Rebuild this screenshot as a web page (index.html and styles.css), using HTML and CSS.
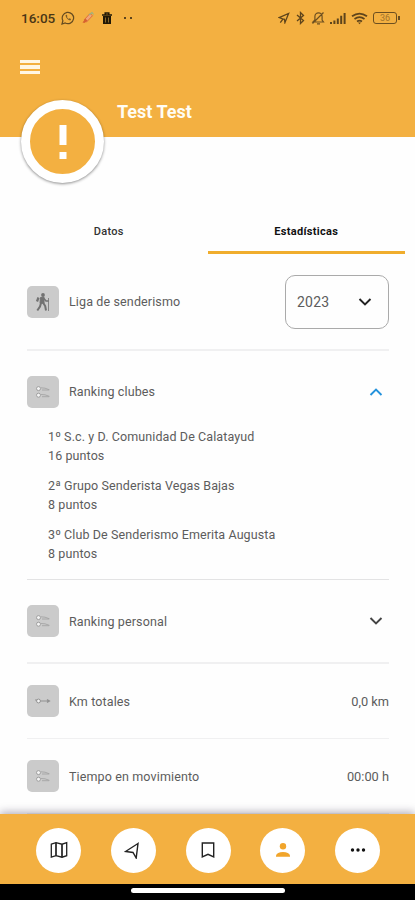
FILE: index.html
```html
<!DOCTYPE html>
<html lang="es">
<head>
<meta charset="utf-8">
<meta name="viewport" content="width=device-width, initial-scale=1">
<title>Estadísticas</title>
<link rel="stylesheet" href="styles.css">
</head>
<body>
<svg class="defs" aria-hidden="true">
  <symbol id="i-list" viewBox="0 0 16 16">
    <g fill="#f4f4f4" stroke="#929292" stroke-width=".8"><circle cx="3.5" cy="4.6" r="2"/><circle cx="3.5" cy="11.2" r="2"/></g>
    <path d="M6 3.800l4 .4 4.500 1.600M7 6h7M6 10.500l4 .3 4.500 1.600M7 12.700h7" fill="none" stroke="#a0a0a0" stroke-width=".8"/>
  </symbol>
  <symbol id="i-down" viewBox="0 0 14 10"><path d="M1.500 2L7 7.500 12.500 2" fill="none" stroke="currentColor" stroke-width="1.900"/></symbol>
</svg>
<div class="screen">
  <header class="header">
    <div class="status">
      <span class="clock">16:05</span>
      <svg class="s-wa" width="14" height="14" viewBox="0 0 14 14" fill="none" stroke="#654b20" stroke-width="1.200"><path d="M1 13l.9-3.300a5.700 5.700 0 1 1 2.300 2.300z"/><path d="M4.700 4c-.7 2 2.900 6 5 5.200l.3-1.300-1.500-.7-.8.7-1.900-1.900.6-.8-.6-1.400z" fill="#795b28" stroke="none"/></svg>
      <svg class="s-clip" width="14" height="14" viewBox="0 0 14 14" fill="none"><path d="M3 9l6-6.500 2.500 2.200-6 6.300z" fill="#f1a477" stroke="#db713d"/><path d="M1.500 11.500l3-4 2 2.200-3 2.300z" fill="#d7632f"/><path d="M8 4l3-2.500 1.500 2" stroke="#9ab183" stroke-width="1.200"/></svg>
      <svg class="s-bin" width="12" height="13" viewBox="0 0 12 13"><path d="M1 3h10M4.300 2.300V1h3.400v1.300" stroke="#211806" stroke-width="1.700" fill="none"/><path d="M2 4h8v8H2z" fill="#211806"/><path d="M4.500 5.500v5M7.500 5.500v5" stroke="#a77c32" stroke-width=".8"/></svg>
      <span class="dots"><i></i><i></i></span>
      <span class="grow"></span>
      <svg class="s-loc" width="12" height="12" viewBox="0 0 13 13" fill="none" stroke="#5e441b" stroke-width="1.400"><path d="M1.200 6L11.500 1.500 7.500 11.500 7 8 5 7.500zM5.500 7.500L2.500 11.500"/></svg>
      <svg class="s-bt" width="9" height="14" viewBox="0 0 9 14" fill="none" stroke="#5e441b" stroke-width="1.300"><path d="M1 4l6.500 5.500-3 3V1.500l3 3L1 10"/></svg>
      <svg class="s-bell" width="15" height="14" viewBox="0 0 15 14" fill="none" stroke="#6c4f20" stroke-width="1.200"><path d="M2 11h10.500l-1.400-2V5.500a3.600 3.600 0 0 0-7.200 0V9zM6 12.800h3M1.500 12.500L12.500 1.500"/></svg>
      <svg class="s-sig" width="16" height="13" viewBox="0 0 16 13" fill="#5e441b"><path d="M0 10h2v2H0zM3.400 8.500h2V12h-2zM6.800 6.500h2V12h-2zM10.200 3.800h2V12h-2zM13.600 1h2v11h-2z"/></svg>
      <svg class="s-wifi" width="17" height="13" viewBox="0 0 17 13" fill="none" stroke="#5e441b" stroke-width="1.700"><path d="M1 4.300q7.500-5.500 15 0M3.500 7q5-3.600 10 0M6 9.500q2.500-1.700 5 0"/><path d="M7 10.500h3l-1.500 1.800z" fill="#5e441b" stroke="none"/></svg>
      <span class="battery">36</span>
    </div>
    <div class="burger"><i></i><i></i><i></i></div>
    <div class="profile">
      <div class="avatar"><svg width="8" height="34" viewBox="0 0 8 34" fill="#fff"><path d="M.5 0h7v20h-7zM.5 27h7v7h-7z"/></svg></div>
      <h1 class="name">Test Test</h1>
    </div>
  </header>

  <nav class="tabs">
    <a class="tab">Datos</a>
    <a class="tab active">Estadísticas</a>
  </nav>

  <main class="content">
    <section class="row league">
      <span class="tile"><svg width="16" height="20" viewBox="0 0 16 20" fill="none" stroke="#727272"><circle cx="8" cy="3" r="1.900" fill="#727272" stroke="none"/><path d="M5.500 5.500l3.500-.3v6H5z" fill="#727272"/><path d="M3.500 5.500L2 9.500" stroke-width="2.300"/><path d="M8.500 6l2.500 3h2.500" stroke-width="1.500"/><path d="M6 11l-1 3.500-2.700 4M8 10.500l2.200 3.500.8 4.500" stroke-width="2"/><path d="M13.500 6v13" stroke-width=".8"/></svg></span>
      <span class="label">Liga de senderismo</span>
      <span class="select"><span>2023</span><svg width="14" height="10"><use href="#i-down"/></svg></span>
    </section>
    <section class="clubs">
      <div class="row clubs-head">
        <span class="tile"><svg width="16" height="16"><use href="#i-list"/></svg></span>
        <span class="label">Ranking clubes</span>
        <svg class="chev up" width="14" height="10"><use href="#i-down"/></svg>
      </div>
      <ol class="ranking">
        <li><span>1º S.c. y D. Comunidad De Calatayud</span><span>16 puntos</span></li>
        <li><span>2ª Grupo Senderista Vegas Bajas</span><span>8 puntos</span></li>
        <li><span>3º Club De Senderismo Emerita Augusta</span><span>8 puntos</span></li>
      </ol>
    </section>
    <section class="row personal">
      <span class="tile"><svg width="16" height="16"><use href="#i-list"/></svg></span>
      <span class="label">Ranking personal</span>
      <svg class="chev" width="14" height="10"><use href="#i-down"/></svg>
    </section>
    <section class="row km">
      <span class="tile"><svg width="16" height="10" viewBox="0 0 16 10" fill="none" stroke="#929292"><path d="M4 5h10M12 3.500L14.500 5 12 6.500" stroke-width="1.200"/><circle cx="3.500" cy="5" r="1.900" fill="#f4f4f4"/><path d="M1 3v2"/></svg></span>
      <span class="label">Km totales</span>
      <span class="value">0,0 km</span>
    </section>
    <section class="row time">
      <span class="tile"><svg width="16" height="16"><use href="#i-list"/></svg></span>
      <span class="label">Tiempo en movimiento</span>
      <span class="value">00:00 h</span>
    </section>
  </main>

  <nav class="bottom">
    <a class="round"><svg width="18" height="18" viewBox="0 0 18 18" fill="none" stroke="#222" stroke-width="1.300"><path d="M1.300 3.200L6 1.700l6 1.500 4.700-1.500v13L12 16.200l-6-1.500-4.700 1.500z"/><path d="M6 1.700v13M12 3.200v13" stroke-width="1.700"/></svg></a>
    <a class="round"><svg width="18" height="18" viewBox="0 0 18 18" fill="none" stroke="#222" stroke-width="1.400"><path d="M14 2.500L1.500 10.500l7.500 1L12.200 17z"/></svg></a>
    <a class="round"><svg width="16" height="18" viewBox="0 0 16 18" fill="none" stroke="#222" stroke-width="1.400"><path d="M2.300 2h11.400v14L8 13.300 2.300 16z"/></svg></a>
    <a class="round"><svg width="16" height="16" viewBox="0 0 16 16" fill="#f1a52b"><circle cx="8" cy="4.200" r="3.200"/><path d="M1 14.700v-1.200Q2 10 8 10t7 3.500v1.200z"/></svg></a>
    <a class="round"><svg width="16" height="4" viewBox="0 0 16 4" fill="#111"><circle cx="2.500" cy="2" r="1.700"/><circle cx="8" cy="2" r="1.700"/><circle cx="13.500" cy="2" r="1.700"/></svg></a>
  </nav>
  <div class="system"><i></i></div>
</div>
</body>
</html>
```

FILE: styles.css
```css
* { box-sizing: border-box; }
body { margin: 0; background: #fefefe; font-family: Roboto, "Liberation Sans", sans-serif; color: #5c5c5c; }
.defs { display: none; }
.screen { width: 415px; height: 900px; display: flex; flex-direction: column; overflow: hidden; }
.screen svg { display: block; flex: none; }

.header { flex: none; height: 137px; background: #f3b041; }
.status { height: 36px; padding: 0 15px 0 21px; display: flex; align-items: center; }
.clock { width: 35px; font-size: 13.5px; font-weight: 500; color: #493616; }
.s-wa { margin-left: 5px; }
.s-clip { margin-left: 6px; }
.s-bin { margin-left: 6px; }
.dots { display: flex; gap: 4px; margin-left: 11px; }
.dots i { width: 2px; height: 2px; background: #5e441b; }
.grow { flex: 1; }
.s-bt { margin-left: 6px; }
.s-bell { margin-left: 6px; }
.s-sig { margin-left: 4px; }
.s-wifi { margin-left: 5px; }
.battery { position: relative; margin: 0 3px 0 5px; width: 24px; height: 12px; border: 1.500px solid #6c4f20; border-radius: 3px; font-size: 9px; line-height: 10px; text-align: center; color: #a2732b; }
.battery::after { content: ""; position: absolute; right: -4px; top: 3px; width: 2px; height: 4px; background: #6c4f20; }
.burger { margin: 24px 0 0 20px; width: 20px; display: grid; gap: 2px; }
.burger i { height: 3.400px; background: #fff6e4; }
.profile { display: flex; margin: 26px 0 0 21px; align-items: flex-start; }
.avatar { flex: none; width: 83px; height: 83px; border: 9px solid #fff; border-radius: 50%; background: #f3b041; display: flex; align-items: center; justify-content: center; box-shadow: 0 1px 3px rgba(0,0,0,.45); position: relative; }
.name { margin: 1px 0 0 13px; font-size: 18px; line-height: 22px; font-weight: 700; color: #fffdf5; }

.tabs { flex: none; display: flex; height: 45px; margin: 72px 10px 0; }
.tab { flex: 1; display: flex; justify-content: center; font-size: 11px; line-height: 45px; font-weight: 500; color: #333; letter-spacing: .3px; border-bottom: 3px solid transparent; }
.tab.active { color: #111; font-weight: 700; border-color: #f0ad2d; letter-spacing: .3px; }

.content { flex: 1; min-height: 0; overflow: hidden; padding: 0 26px 0 27px; font-size: 12.5px; }
.row { display: flex; align-items: center; border-bottom: 2px solid #f0f0f1; }
.tile { flex: none; width: 32px; height: 32px; border-radius: 5px; background: #cbcbcb; display: flex; align-items: center; justify-content: center; }
.label { margin-left: 10px; flex: 1; letter-spacing: .13px; white-space: nowrap; }
.value { font-size: 12.8px; }
.league { height: 97px; }
.select { width: 104px; height: 54px; border: 1px solid #aaa; border-radius: 10px; padding: 0 16px 0 11px; display: flex; align-items: center; justify-content: space-between; font-size: 14px; letter-spacing: .2px; }
.select svg { color: #222; }
.clubs { height: 229px; border-bottom: 1px solid #e3e3e4; }
.clubs-head { height: 76px; padding-top: 5px; border: 0; }
.chev { color: #444; margin-right: 6px; }
.chev.up { color: #2492dc; transform: rotate(180deg); }
.ranking { list-style: none; margin: 0; padding: 0 0 0 21px; display: grid; gap: 10px; font-size: 12.500px; }
.ranking li { display: grid; line-height: 19.400px; letter-spacing: .1px; white-space: nowrap; }
.personal { height: 84px; }
.km { height: 75px; border-bottom-width: 1px; }
.time { height: 75px; border-bottom-width: 1px; }

.bottom { flex: none; position: relative; height: 70px; padding: 2px 35px 0 36px; background: #f3b041; display: flex; justify-content: space-between; align-items: center; box-shadow: 0 -2px 8px rgba(40,30,60,.35); }
.round { width: 45px; height: 45px; border-radius: 50%; background: #fff; display: flex; align-items: center; justify-content: center; }
.system { flex: none; position: relative; height: 16px; background: #000; display: flex; justify-content: center; padding-top: 4px; }
.system i { width: 154px; height: 5px; border-radius: 3px; background: #fff; }
```
